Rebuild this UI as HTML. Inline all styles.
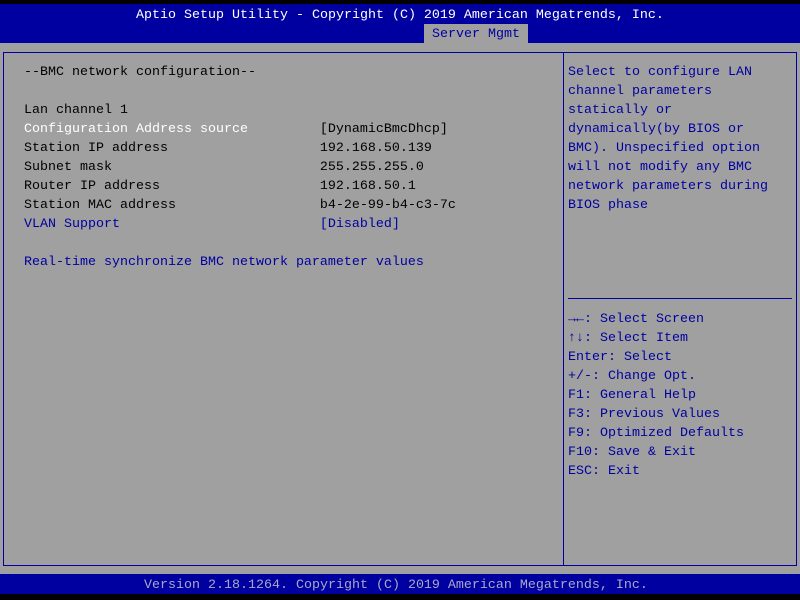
<!DOCTYPE html>
<html><head><style>
*{margin:0;padding:0}
body{width:800px;height:600px;background:#000;position:relative;overflow:hidden;font-family:"Liberation Mono","DejaVu Sans Mono",monospace;font-size:13.33px;}
.t{position:absolute;white-space:pre;line-height:19px;}
#top{position:absolute;left:0;top:4px;width:800px;height:39px;background:#0000a0;}
#tab{position:absolute;left:424px;top:24px;width:104px;height:19px;background:#a0a0a0;}
#main{position:absolute;left:0;top:43px;width:800px;height:531px;background:#a0a0a0;}
#box{position:absolute;left:3px;top:52px;width:792px;height:512px;border:1px solid #0000a0;}
#div{position:absolute;left:563px;top:52px;width:1px;height:514px;background:#0000a0;}
#hr{position:absolute;left:568px;top:298px;width:224px;height:1px;background:#0000a0;}
#bot{position:absolute;left:0;top:574px;width:800px;height:20px;background:#0000a0;}
.w{color:#fff}.b{color:#0000a0}.k{color:#000}.f{color:#a8a8c8}
</style></head><body>
<div id="top"></div><div id="tab"></div><div id="main"></div><div id="box"></div><div id="div"></div><div id="hr"></div><div id="bot"></div>
<div class="t w" style="left:136px;top:6px">Aptio Setup Utility - Copyright (C) 2019 American Megatrends, Inc.</div>
<div class="t b" style="left:432px;top:25px">Server Mgmt</div>
<div class="t k" style="left:24px;top:63px">--BMC network configuration--

Lan channel 1
<span class="w">Configuration Address source</span>         [DynamicBmcDhcp]
Station IP address                   192.168.50.139
Subnet mask                          255.255.255.0
Router IP address                    192.168.50.1
Station MAC address                  b4-2e-99-b4-c3-7c
<span class="b">VLAN Support                         [Disabled]</span>

<span class="b">Real-time synchronize BMC network parameter values</span></div>
<div class="t b" style="left:568px;top:63px">Select to configure LAN
channel parameters
statically or
dynamically(by BIOS or
BMC). Unspecified option
will not modify any BMC
network parameters during
BIOS phase</div>
<div class="t b" style="left:568px;top:310px">→←: Select Screen
↑↓: Select Item
Enter: Select
+/-: Change Opt.
F1: General Help
F3: Previous Values
F9: Optimized Defaults
F10: Save &amp; Exit
ESC: Exit</div>
<div class="t f" style="left:144px;top:576px">Version 2.18.1264. Copyright (C) 2019 American Megatrends, Inc.</div>
</body></html>
